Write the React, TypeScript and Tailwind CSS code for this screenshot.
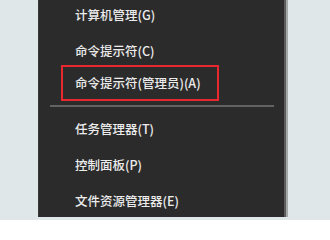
const topItems = ["计算机管理(G)", "命令提示符(C)"];
const bottomItems = ["任务管理器(T)", "控制面板(P)", "文件资源管理器(E)"];

const font = {
  fontFamily: '"Noto Sans CJK SC", "Noto Sans", sans-serif',
};

export default function App() {
  return (
    <div className="w-[330px] h-[220px] overflow-hidden bg-[#dfe7e9]">
      <div
        className="ml-[38px] w-[248px] h-full bg-[#2b2b2b] border-l border-[#3a3a3a] border-r-[2px] border-r-[#5c5c5c] shadow-[2px_0_0_#a3a8a9] text-[#ececec] text-[12.5px] font-medium"
        style={font}
      >
        <div className="-mt-[3px]">
          <div className="h-[36px] flex items-center pl-[36px]">{topItems[0]}</div>
          <div className="h-[32px] flex items-center pt-[4px] pl-[36px]">{topItems[1]}</div>
          <div className="h-[36px] pl-[22px]">
            <div className="w-[158px] h-full flex items-center pl-[12px] border-2 border-[#e8282e]">
              命令提示符(管理员)(A)
            </div>
          </div>
        </div>
        <div className="h-[10px] flex items-center">
          <div className="ml-[11px] mr-[10px] w-full h-[2px] bg-[#626262]" />
        </div>
        {bottomItems.map((t) => (
          <div key={t} className="h-[36px] flex items-center pl-[36px]">
            {t}
          </div>
        ))}
      </div>
    </div>
  );
}
